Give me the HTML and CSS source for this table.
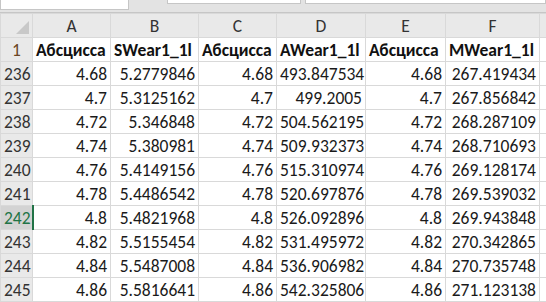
FILE: index.html
```html
<!DOCTYPE html>
<html lang="ru">
<head>
  <meta charset="UTF-8" />
  <title>Лист1</title>
  <link rel="stylesheet" href="styles.css">
</head>
<body>
  <div class="ribbon-edge">
    <div class="edge-box name-box"></div>
    <div class="edge-box formula-left"></div>
    <div class="edge-box formula-right"></div>
  </div>

  <table class="sheet">
    <colgroup>
      <col class="col-rowhead">
      <col class="col-a">
      <col class="col-b">
      <col class="col-c">
      <col class="col-d">
      <col class="col-e">
      <col class="col-f">
      <col class="col-rest">
    </colgroup>
    <thead>
      <tr>
        <th class="corner"><span class="select-all"></span></th>
        <th class="col-head">A</th>
        <th class="col-head">B</th>
        <th class="col-head">C</th>
        <th class="col-head">D</th>
        <th class="col-head">E</th>
        <th class="col-head">F</th>
        <th class="col-head"></th>
      </tr>
    </thead>
    <tbody id="rows">
      <tr>
        <th class="row-head first-row">1</th>
        <td class="title">Абсцисса</td>
        <td class="title">SWear1_1l</td>
        <td class="title">Абсцисса</td>
        <td class="title">AWear1_1l</td>
        <td class="title">Абсцисса</td>
        <td class="title">MWear1_1l</td>
        <td></td>
      </tr>
    </tbody>
  </table>

  <script>
    // rows 236..245 of the sheet
    const data = [
      [236, '4.68', '5.2779846', '4.68', '493.847534', '4.68', '267.419434'],
      [237, '4.7', '5.3125162', '4.7', '499.2005', '4.7', '267.856842'],
      [238, '4.72', '5.346848', '4.72', '504.562195', '4.72', '268.287109'],
      [239, '4.74', '5.380981', '4.74', '509.932373', '4.74', '268.710693'],
      [240, '4.76', '5.4149156', '4.76', '515.310974', '4.76', '269.128174'],
      [241, '4.78', '5.4486542', '4.78', '520.697876', '4.78', '269.539032'],
      [242, '4.8', '5.4821968', '4.8', '526.092896', '4.8', '269.943848'],
      [243, '4.82', '5.5155454', '4.82', '531.495972', '4.82', '270.342865'],
      [244, '4.84', '5.5487008', '4.84', '536.906982', '4.84', '270.735748'],
      [245, '4.86', '5.5816641', '4.86', '542.325806', '4.86', '271.123138']
    ];
    const activeRow = 242;
    const tbody = document.getElementById('rows');

    data.forEach((row) => {
      const tr = document.createElement('tr');
      const head = document.createElement('th');
      head.className = row[0] === activeRow ? 'row-head active' : 'row-head';
      head.textContent = row[0];
      tr.appendChild(head);

      row.slice(1).forEach((value) => {
        const td = document.createElement('td');
        td.className = 'num';
        td.textContent = value;
        tr.appendChild(td);
      });

      tr.appendChild(document.createElement('td'));
      tbody.appendChild(tr);
    });
  </script>
</body>
</html>
```

FILE: styles.css
```css
body {
  margin: 0;
  padding: 0;
  background-color: #fff;
  font-family: Calibri, Carlito, 'Liberation Sans', Arial, sans-serif;
  color: #1a1a1a;
  overflow: hidden;
}
.ribbon-edge {
  display: flex;
  height: 13px;
  background-color: #e3e3e3;
  border-bottom: 1px solid #c6c6c6;
  box-sizing: border-box;
}
.edge-box {
  background-color: #fff;
  border: 1px solid #c6c6c6;
  border-top: none;
  box-sizing: border-box;
}
.name-box {
  width: 129px;
  height: 10px;
}
.formula-left {
  width: 134px;
  height: 4px;
  margin-left: 38px;
}
.formula-right {
  flex: 1;
  height: 4px;
  margin-left: 4px;
}
.sheet {
  border-collapse: collapse;
  table-layout: fixed;
  width: 560px;
  font-size: 17.5px;
}
.col-rowhead { width: 32px; }
.col-a { width: 78px; }
.col-b { width: 88px; }
.col-c { width: 78px; }
.col-d { width: 89px; }
.col-e { width: 80px; }
.col-f { width: 94px; }
.col-rest { width: 21px; }
.sheet tr {
  height: 24px;
}
.sheet th,
.sheet td {
  padding: 0 3px 0;
  border: 1px solid #d9d9d9;
  white-space: nowrap;
  overflow: hidden;
  vertical-align: bottom;
  line-height: 21px;
}
.col-head {
  background-color: #e9e9e9;
  border-color: #c3c3c3;
  border-top: none;
  font-weight: normal;
  color: #333;
  text-align: center;
  vertical-align: middle;
}
.corner {
  position: relative;
  background-color: #e9e9e9;
  border-color: #c3c3c3;
  border-top: none;
}
.select-all {
  position: absolute;
  right: 3px;
  bottom: 3px;
  width: 0;
  height: 0;
  border-left: 13px solid transparent;
  border-bottom: 13px solid #c8c8c8;
}
.row-head {
  background-color: #e9e9e9;
  border-color: #c3c3c3;
  font-weight: normal;
  color: #333;
  text-align: center;
  padding: 0;
  border-left: none;
}
.first-row {
  color: #6a4524;
}
.row-head.active {
  background-color: #d3d3d3;
  color: #217346;
  border-right: 2px solid #217346;
}
.title {
  font-weight: bold;
  text-align: left;
  color: #111;
}
.num {
  text-align: right;
}
```
